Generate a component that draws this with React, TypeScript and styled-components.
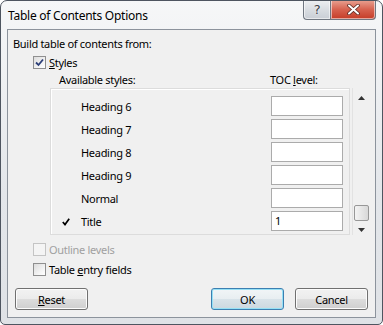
import React from 'react';
import styled, { createGlobalStyle } from 'styled-components';

const GlobalStyle = createGlobalStyle`
  html, body {
    margin: 0;
    padding: 0;
    background: #ffffff;
  }
  body {
    font-family: "Noto Sans", "Open Sans", sans-serif;
    font-size: 11px;
    letter-spacing: -0.3px;
    color: #000;
  }
`;

type StyleRow = {
  name: string,
  level: string,
  checked?: boolean,
}
const styleRows: StyleRow[] = [
  { name: 'Heading 6', level: '' },
  { name: 'Heading 7', level: '' },
  { name: 'Heading 8', level: '' },
  { name: 'Heading 9', level: '' },
  { name: 'Normal', level: '' },
  { name: 'Title', level: '1', checked: true },
];

const CheckMark = () => (
  <svg width="9" height="9" viewBox="0 0 9 9">
    <path d="M1 4.5 L3.5 7 L8 1.5" stroke="#2d3f78" strokeWidth="1.8" fill="none" />
  </svg>
);

const Checkbox = ({ checked, disabled }: { checked?: boolean, disabled?: boolean }) => (
  <Box $disabled={disabled}>{checked && <CheckMark />}</Box>
);

export default function App() {
  return (
    <>
      <GlobalStyle />
      <Window>
        <TitleBar>
          <Title>Table of Contents Options</Title>
          <Caption>
            <HelpButton>?</HelpButton>
            <CloseButton>
              <svg width="13" height="11" viewBox="0 0 13 11">
                <path d="M2 1.5 L11 9.5 M11 1.5 L2 9.5" stroke="#5a2a22" strokeWidth="3.6" strokeLinecap="round" />
                <path d="M2 1.5 L11 9.5 M11 1.5 L2 9.5" stroke="#ffffff" strokeWidth="2" strokeLinecap="round" />
              </svg>
            </CloseButton>
          </Caption>
        </TitleBar>
        <Client>
          <Label>Build table of contents from:</Label>
          <CheckRow $top={5}>
            <Checkbox checked />
            <span><u>S</u>tyles</span>
          </CheckRow>
          <ColumnHeads>
            <span>Available styles:</span>
            <span>TOC <u>l</u>evel:</span>
          </ColumnHeads>
          <ListArea>
            <ListBox>
              {styleRows.map((row) => (
                <ListRow key={row.name}>
                  <Tick>
                    {row.checked && (
                      <svg width="8" height="8" viewBox="0 0 8 8">
                        <path d="M0.8 4 L3 6.6 L7.2 0.8" stroke="#000" strokeWidth="1.7" fill="none" />
                      </svg>
                    )}
                  </Tick>
                  <StyleName>{row.name}</StyleName>
                  <LevelInput>{row.level}</LevelInput>
                </ListRow>
              ))}
            </ListBox>
            <ScrollBar>
              <Arrow viewBox="0 0 7 4"><path d="M0 4 L3.5 0 L7 4 Z" fill="#333" /></Arrow>
              <Thumb />
              <Arrow viewBox="0 0 7 4"><path d="M0 0 L3.5 4 L7 0 Z" fill="#333" /></Arrow>
            </ScrollBar>
          </ListArea>
          <CheckRow $top={8} $disabled>
            <Checkbox disabled />
            <span>Outline levels</span>
          </CheckRow>
          <CheckRow $top={7}>
            <Checkbox />
            <span>Table <u>e</u>ntry fields</span>
          </CheckRow>
          <Buttons>
            <Button><u>R</u>eset</Button>
            <Spacer />
            <Button $primary>OK</Button>
            <Button>Cancel</Button>
          </Buttons>
        </Client>
      </Window>
    </>
  );
}

const Window = styled.div`
  width: 381px;
  height: 323px;
  border: 1px solid #4e5560;
  border-radius: 7px 7px 5px 5px;
  background: linear-gradient(#f6f7f8, #e3e6ea 60%, #dfe2e6);
  display: flex;
  flex-direction: column;
  overflow: hidden;
`;

const TitleBar = styled.div`
  height: 28px;
  display: flex;
  justify-content: space-between;
  align-items: flex-start;
`;

const Title = styled.div`
  padding: 7px 0 0 7px;
  font-size: 12px;
  letter-spacing: -0.25px;
  line-height: 15px;
  color: #000;
`;

const Caption = styled.div`
  display: flex;
  margin-right: 6px;
  margin-top: -1px;
`;

const CapButton = styled.div`
  height: 19px;
  display: flex;
  align-items: center;
  justify-content: center;
  border: 1px solid #6f7680;
  border-top: none;
  box-shadow: inset 0 0 0 1px rgba(255, 255, 255, 0.55);
`;

const HelpButton = styled(CapButton)`
  width: 26px;
  border-right: none;
  border-radius: 0 0 0 4px;
  background: linear-gradient(#eef0f2, #d9dde2 50%, #c9ced5);
  font-family: "DejaVu Sans", sans-serif;
  font-size: 13px;
  color: #3a3f46;
  text-shadow: 0 0 2px #fff;
`;

const CloseButton = styled(CapButton)`
  width: 44px;
  border-radius: 0 0 4px 0;
  background: linear-gradient(#e9a393, #d7624f 50%, #c53c27);
`;

const Client = styled.div`
  flex: 1;
  margin: 0 6px 6px 6px;
  border: 1px solid #8c939c;
  background: #f0f0f0;
  padding: 6px 0 0 0;
  display: flex;
  flex-direction: column;
`;

const Label = styled.div`
  padding-left: 5px;
  line-height: 15px;
`;

const CheckRow = styled.div<{ $top: number, $disabled?: boolean }>`
  margin-top: ${(p) => p.$top}px;
  margin-left: 25px;
  height: 13px;
  display: flex;
  align-items: center;
  gap: 3px;
  line-height: 13px;
  color: ${(p) => (p.$disabled ? '#a0a0a0' : '#000')};
`;

const Box = styled.div<{ $disabled?: boolean }>`
  width: 11px;
  height: 11px;
  border: 1px solid ${(p) => (p.$disabled ? '#c4c4c4' : '#8f8f8f')};
  background: ${(p) => (p.$disabled ? '#f4f4f4' : 'linear-gradient(135deg, #dcdcdc, #f6f6f6 70%, #ffffff)')};
  display: flex;
  align-items: center;
  justify-content: center;
`;

const ColumnHeads = styled.div`
  margin-top: 3px;
  height: 15px;
  line-height: 15px;
  display: grid;
  grid-template-columns: 211px auto;
  padding-left: 51px;
`;

const ListArea = styled.div`
  margin: 1px 0 0 42px;
  height: 147px;
  display: flex;
`;

const ListBox = styled.div`
  width: 298px;
  border: 1px solid #dcdcdc;
  box-shadow: inset 1px 1px 0 #ffffff;
  padding: 6px 0 0 0;
`;

const ListRow = styled.div`
  height: 23px;
  display: grid;
  grid-template-columns: 19px 1fr 72px;
  align-items: center;
  padding: 0 6px 0 11px;
`;

const Tick = styled.div`
  display: flex;
  align-items: center;
`;

const StyleName = styled.div`
  line-height: 15px;
`;

const LevelInput = styled.div`
  height: 18px;
  border: 1px solid #ababab;
  background: #ffffff;
  line-height: 18px;
  padding-left: 3px;
  margin-top: -1px;
`;

const ScrollBar = styled.div`
  width: 17px;
  margin-left: 2px;
  border-left: 1px solid #e2e2e2;
  display: flex;
  flex-direction: column;
  align-items: center;
  padding: 8px 0 3px 0;
`;

const Arrow = styled.svg`
  width: 7px;
  height: 4px;
  flex: none;
`;

const Thumb = styled.div`
  margin-top: auto;
  margin-bottom: 7px;
  width: 13px;
  height: 14px;
  border: 1px solid #979797;
  border-radius: 2px;
  background: linear-gradient(90deg, #f3f3f3, #e6e6e6 50%, #d8d8d8);
`;

const Buttons = styled.div`
  margin: 12px 7px 0 7px;
  display: flex;
  gap: 11px;
`;

const Spacer = styled.div`
  flex: 1;
`;

const Button = styled.div<{ $primary?: boolean }>`
  width: 71px;
  height: 20px;
  border: 1px solid ${(p) => (p.$primary ? '#3c7fb1' : '#707070')};
  border-radius: 3px;
  background: ${(p) =>
    p.$primary
      ? 'linear-gradient(#f1f5f7, #e8eef1 50%, #d9e3e9 50%, #ccd8df)'
      : 'linear-gradient(#f2f2f2, #ebebeb 50%, #dddddd 50%, #cfcfcf)'};
  box-shadow: inset 0 0 0 1px ${(p) => (p.$primary ? '#96e0f5' : '#fcfcfc')};
  display: flex;
  align-items: center;
  justify-content: center;
  line-height: 15px;
`;
